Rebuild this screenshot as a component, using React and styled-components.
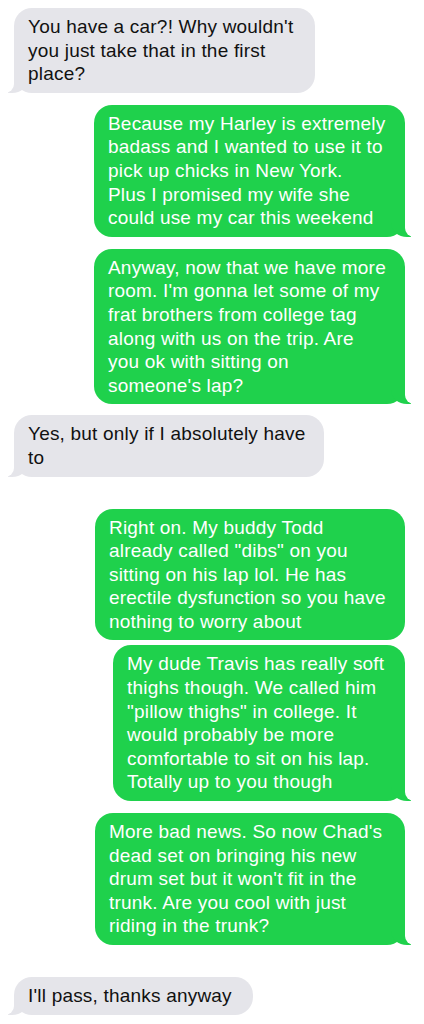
import React from 'react'
import styled, { createGlobalStyle, css } from 'styled-components'

const GRAY = '#e5e5ea'
const GREEN = '#1fd14c'

const GlobalStyle = createGlobalStyle`
  html, body {
    margin: 0;
    padding: 0;
    background: #ffffff;
  }
  body {
    font-family: "Liberation Sans", Arial, sans-serif;
    -webkit-font-smoothing: antialiased;
  }
`

const Thread = styled.div`
  display: flex;
  flex-direction: column;
  width: 424px;
  min-height: 1024px;
  box-sizing: border-box;
  padding: 8px 19px 0 14px;
  background: #fff;
`

const Bubble = styled.div`
  position: relative;
  box-sizing: border-box;
  width: ${p => p.$w}px;
  margin-top: ${p => p.$gap || 0}px;
  padding: 7px 12px 7px 14px;
  border-radius: 18px;
  font-size: 19px;
  letter-spacing: 0.2px;
  line-height: 23.6px;
  white-space: pre-line;
  align-self: ${p => (p.$me ? 'flex-end' : 'flex-start')};
  background: ${p => (p.$me ? GREEN : GRAY)};
  color: ${p => (p.$me ? '#ffffff' : '#111111')};

  ${p => p.$tail && p.$me && css`
    &::before {
      content: "";
      position: absolute;
      bottom: 0;
      right: -6px;
      width: 20px;
      height: 18px;
      background: ${GREEN};
      border-bottom-left-radius: 16px 14px;
    }
    &::after {
      content: "";
      position: absolute;
      bottom: 0;
      right: -10px;
      width: 10px;
      height: 18px;
      background: #fff;
      border-bottom-left-radius: 9px;
    }
  `}

  ${p => p.$tail && !p.$me && css`
    &::before {
      content: "";
      position: absolute;
      bottom: 0;
      left: -6px;
      width: 20px;
      height: 18px;
      background: ${GRAY};
      border-bottom-right-radius: 16px 14px;
    }
    &::after {
      content: "";
      position: absolute;
      bottom: 0;
      left: -10px;
      width: 10px;
      height: 18px;
      background: #fff;
      border-bottom-right-radius: 9px;
    }
  `}
`

const messages = [
  { me: false, w: 301, gap: 0, tail: true, text: "You have a car?! Why wouldn't\nyou just take that in the first\nplace?" },
  { me: true, w: 311, gap: 12, tail: true, text: 'Because my Harley is extremely\nbadass and I wanted to use it to\npick up chicks in New York.\nPlus I promised my wife she\ncould use my car this weekend' },
  { me: true, w: 311, gap: 12, tail: true, text: "Anyway, now that we have more\nroom. I'm gonna let some of my\nfrat brothers from college tag\nalong with us on the trip. Are\nyou ok with sitting on\nsomeone's lap?" },
  { me: false, w: 310, gap: 11, tail: true, text: 'Yes, but only if I absolutely have\nto' },
  { me: true, w: 310, gap: 32, tail: false, text: 'Right on. My buddy Todd\nalready called "dibs" on you\nsitting on his lap lol. He has\nerectile dysfunction so you have\nnothing to worry about' },
  { me: true, w: 292, gap: 5, tail: true, text: 'My dude Travis has really soft\nthighs though. We called him\n"pillow thighs" in college. It\nwould probably be more\ncomfortable to sit on his lap.\nTotally up to you though' },
  { me: true, w: 310, gap: 12, tail: true, text: "More bad news. So now Chad's\ndead set on bringing his new\ndrum set but it won't fit in the\ntrunk. Are you cool with just\nriding in the trunk?" },
  { me: false, w: 239, gap: 32, tail: true, text: "I'll pass, thanks anyway" },
]

const App = () => {
  return (
    <>
      <GlobalStyle />
      <Thread>
        {messages.map((m, i) => (
          <Bubble key={i} $me={m.me} $w={m.w} $gap={m.gap} $tail={m.tail}>
            {m.text}
          </Bubble>
        ))}
      </Thread>
    </>
  )
}

export default App
